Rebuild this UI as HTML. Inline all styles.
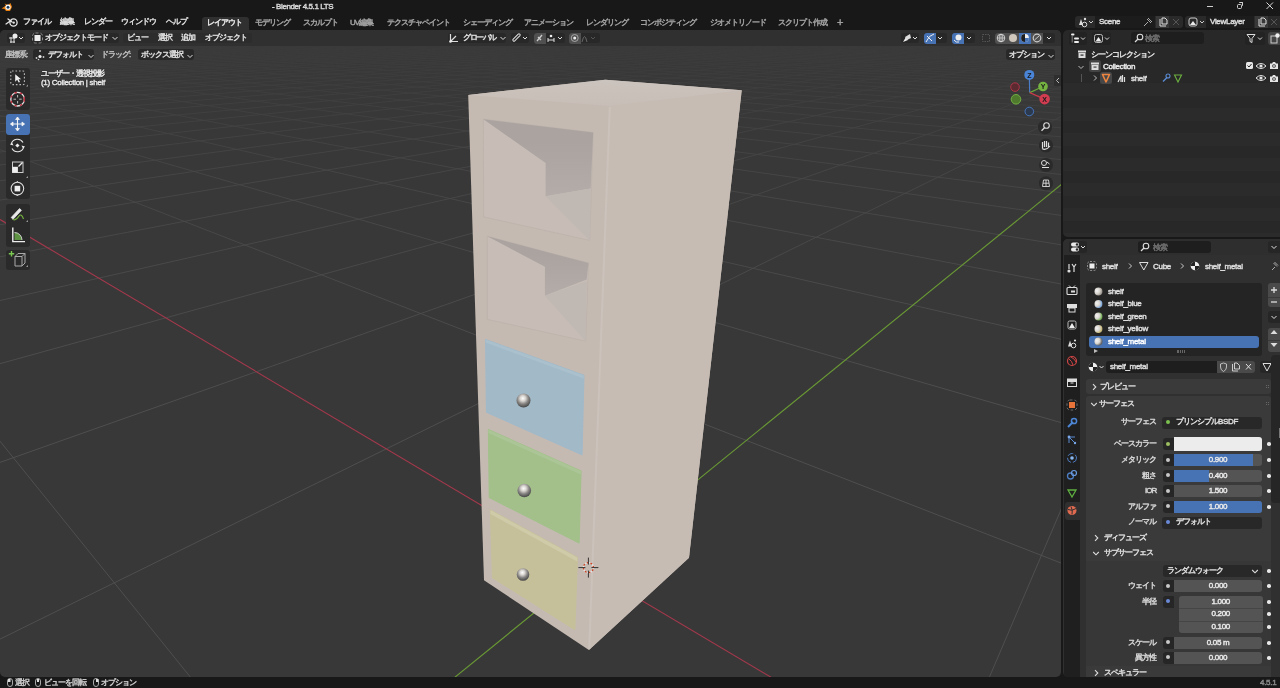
<!DOCTYPE html>
<html><head><meta charset="utf-8">
<style>
*{margin:0;padding:0;box-sizing:border-box}
html,body{width:1280px;height:688px;overflow:hidden}
body{-webkit-text-stroke-width:0.45px;background:#181818;font-family:"Liberation Sans",sans-serif;font-size:8px;color:#dcdcdc;position:relative}
.a{position:absolute;white-space:nowrap;line-height:1;will-change:transform}
.j{letter-spacing:-1px}
.l{letter-spacing:-0.3px}
.g{color:#a0a0a0}
svg{position:absolute;left:0;top:0;overflow:visible}
.btn{position:absolute;border-radius:3px;background:#282828}
.sh{text-shadow:0 0 1px #000,0 0 1px #000}
</style></head><body>
<!-- VIEWPORT -->
<div class="a" style="left:0;top:30px;width:1061px;height:647px;border-radius:5px;background:#383838;overflow:hidden"></div>
<svg width="1280" height="688" viewBox="0 0 1280 688">
<defs>
<clipPath id="vp"><rect x="0" y="30" width="1061" height="647" rx="5"/></clipPath>
<linearGradient id="gfade" x1="0" y1="0" x2="0" y2="688" gradientUnits="userSpaceOnUse">
<stop offset="0.03" stop-color="#fff" stop-opacity="0"/>
<stop offset="0.25" stop-color="#fff" stop-opacity="0.6"/>
<stop offset="0.6" stop-color="#fff" stop-opacity="1"/>
</linearGradient>
<mask id="gmask"><rect x="0" y="0" width="1280" height="688" fill="url(#gfade)"/></mask>
</defs>
<g clip-path="url(#vp)">
<g mask="url(#gmask)" stroke="#515151" stroke-width="0.9" fill="none">
<line x1="988.6" y1="679.0" x2="1063.0" y2="505.0"/>
<line x1="-2.0" y1="640.1" x2="1063.0" y2="115.6"/>
<line x1="-2.0" y1="463.1" x2="1063.0" y2="86.3"/>
<line x1="-2.0" y1="364.2" x2="1063.0" y2="70.0"/>
<line x1="-2.0" y1="301.0" x2="1063.0" y2="59.5"/>
<line x1="-2.0" y1="257.2" x2="1063.0" y2="52.3"/>
<line x1="-2.0" y1="225.1" x2="1063.0" y2="47.0"/>
<line x1="-2.0" y1="200.4" x2="1063.0" y2="42.9"/>
<line x1="-2.0" y1="181.0" x2="1063.0" y2="39.7"/>
<line x1="-2.0" y1="165.2" x2="1063.0" y2="37.1"/>
<line x1="-2.0" y1="152.2" x2="1063.0" y2="34.9"/>
<line x1="-2.0" y1="141.2" x2="1063.0" y2="33.1"/>
<line x1="-2.0" y1="131.9" x2="1063.0" y2="31.6"/>
<line x1="-2.0" y1="123.9" x2="1063.0" y2="30.2"/>
<line x1="-2.0" y1="116.8" x2="1063.0" y2="29.1"/>
<line x1="-2.0" y1="110.7" x2="1063.0" y2="28.1"/>
<line x1="-2.0" y1="105.2" x2="1051.4" y2="28.0"/>
<line x1="-2.0" y1="100.4" x2="1039.2" y2="28.0"/>
<line x1="-2.0" y1="96.0" x2="1027.0" y2="28.0"/>
<line x1="-2.0" y1="92.0" x2="1014.9" y2="28.0"/>
<line x1="-2.0" y1="88.5" x2="1002.8" y2="28.0"/>
<line x1="-2.0" y1="85.2" x2="990.8" y2="28.0"/>
<line x1="-2.0" y1="82.2" x2="978.8" y2="28.0"/>
<line x1="-2.0" y1="79.5" x2="966.8" y2="28.0"/>
<line x1="-2.0" y1="76.9" x2="954.9" y2="28.0"/>
<line x1="-2.0" y1="74.6" x2="943.1" y2="28.0"/>
<line x1="-2.0" y1="72.4" x2="931.3" y2="28.0"/>
<line x1="-2.0" y1="70.4" x2="919.5" y2="28.0"/>
<line x1="-2.0" y1="68.5" x2="907.8" y2="28.0"/>
<line x1="-2.0" y1="66.8" x2="896.2" y2="28.0"/>
<line x1="-2.0" y1="65.2" x2="884.6" y2="28.0"/>
<line x1="-2.0" y1="63.6" x2="873.0" y2="28.0"/>
<line x1="-2.0" y1="62.2" x2="861.5" y2="28.0"/>
<line x1="-2.0" y1="60.8" x2="850.0" y2="28.0"/>
<line x1="-2.0" y1="59.5" x2="838.6" y2="28.0"/>
<line x1="-2.0" y1="58.3" x2="827.2" y2="28.0"/>
<line x1="-2.0" y1="57.1" x2="815.8" y2="28.0"/>
<line x1="-2.0" y1="56.0" x2="804.5" y2="28.0"/>
<line x1="-2.0" y1="55.0" x2="793.3" y2="28.0"/>
<line x1="-2.0" y1="54.0" x2="782.0" y2="28.0"/>
<line x1="-2.0" y1="53.1" x2="770.9" y2="28.0"/>
<line x1="-2.0" y1="52.2" x2="759.7" y2="28.0"/>
<line x1="-2.0" y1="51.3" x2="748.6" y2="28.0"/>
<line x1="-2.0" y1="50.5" x2="737.6" y2="28.0"/>
<line x1="-2.0" y1="49.7" x2="726.6" y2="28.0"/>
<line x1="-2.0" y1="49.0" x2="715.6" y2="28.0"/>
<line x1="-2.0" y1="48.3" x2="704.7" y2="28.0"/>
<line x1="-2.0" y1="47.6" x2="693.8" y2="28.0"/>
<line x1="-2.0" y1="46.9" x2="683.0" y2="28.0"/>
<line x1="-2.0" y1="46.3" x2="672.2" y2="28.0"/>
<line x1="-2.0" y1="45.7" x2="661.4" y2="28.0"/>
<line x1="-2.0" y1="45.1" x2="650.7" y2="28.0"/>
<line x1="-2.0" y1="44.5" x2="640.0" y2="28.0"/>
<line x1="-2.0" y1="44.0" x2="629.4" y2="28.0"/>
<line x1="-2.0" y1="43.5" x2="618.8" y2="28.0"/>
<line x1="-2.0" y1="43.0" x2="608.2" y2="28.0"/>
<line x1="-2.0" y1="42.5" x2="597.7" y2="28.0"/>
<line x1="-2.0" y1="42.0" x2="587.2" y2="28.0"/>
<line x1="-2.0" y1="41.5" x2="576.8" y2="28.0"/>
<line x1="-2.0" y1="41.1" x2="566.4" y2="28.0"/>
<line x1="191.9" y1="679.0" x2="-2.0" y2="438.7"/>
<line x1="1063.0" y1="563.8" x2="-2.0" y2="148.8"/>
<line x1="1063.0" y1="423.2" x2="-2.0" y2="114.7"/>
<line x1="1063.0" y1="339.7" x2="-2.0" y2="94.4"/>
<line x1="1063.0" y1="284.4" x2="-2.0" y2="81.0"/>
<line x1="1063.0" y1="245.1" x2="-2.0" y2="71.5"/>
<line x1="1063.0" y1="215.7" x2="-2.0" y2="64.3"/>
<line x1="1063.0" y1="192.9" x2="-2.0" y2="58.8"/>
<line x1="1063.0" y1="174.7" x2="-2.0" y2="54.4"/>
<line x1="1063.0" y1="159.8" x2="-2.0" y2="50.8"/>
<line x1="1063.0" y1="147.4" x2="-2.0" y2="47.8"/>
<line x1="1063.0" y1="137.0" x2="-2.0" y2="45.2"/>
<line x1="1063.0" y1="128.0" x2="-2.0" y2="43.1"/>
<line x1="1063.0" y1="120.3" x2="-2.0" y2="41.2"/>
<line x1="1063.0" y1="113.5" x2="-2.0" y2="39.5"/>
<line x1="1063.0" y1="107.5" x2="-2.0" y2="38.1"/>
<line x1="1063.0" y1="102.2" x2="-2.0" y2="36.8"/>
<line x1="1063.0" y1="97.4" x2="-2.0" y2="35.6"/>
<line x1="1063.0" y1="93.1" x2="-2.0" y2="34.6"/>
<line x1="1063.0" y1="89.3" x2="-2.0" y2="33.7"/>
<line x1="1063.0" y1="85.8" x2="-2.0" y2="32.8"/>
<line x1="1063.0" y1="82.6" x2="-2.0" y2="32.0"/>
<line x1="1063.0" y1="79.6" x2="-2.0" y2="31.3"/>
<line x1="1063.0" y1="76.9" x2="-2.0" y2="30.7"/>
<line x1="1063.0" y1="74.4" x2="-2.0" y2="30.1"/>
<line x1="1063.0" y1="72.1" x2="-2.0" y2="29.5"/>
<line x1="1063.0" y1="70.0" x2="-2.0" y2="29.0"/>
<line x1="1063.0" y1="68.0" x2="-2.0" y2="28.5"/>
<line x1="1063.0" y1="66.1" x2="-2.0" y2="28.0"/>
<line x1="1063.0" y1="64.4" x2="9.1" y2="28.0"/>
<line x1="1063.0" y1="62.7" x2="21.4" y2="28.0"/>
<line x1="1063.0" y1="61.2" x2="33.7" y2="28.0"/>
<line x1="1063.0" y1="59.7" x2="46.1" y2="28.0"/>
<line x1="1063.0" y1="58.4" x2="58.6" y2="28.0"/>
<line x1="1063.0" y1="57.1" x2="71.1" y2="28.0"/>
<line x1="1063.0" y1="55.9" x2="83.6" y2="28.0"/>
<line x1="1063.0" y1="54.7" x2="96.3" y2="28.0"/>
<line x1="1063.0" y1="53.6" x2="109.0" y2="28.0"/>
<line x1="1063.0" y1="52.6" x2="121.7" y2="28.0"/>
<line x1="1063.0" y1="51.6" x2="134.6" y2="28.0"/>
<line x1="1063.0" y1="50.7" x2="147.4" y2="28.0"/>
<line x1="1063.0" y1="49.8" x2="160.4" y2="28.0"/>
<line x1="1063.0" y1="48.9" x2="173.4" y2="28.0"/>
<line x1="1063.0" y1="48.1" x2="186.5" y2="28.0"/>
<line x1="1063.0" y1="47.3" x2="199.6" y2="28.0"/>
<line x1="1063.0" y1="46.6" x2="212.9" y2="28.0"/>
<line x1="1063.0" y1="45.9" x2="226.1" y2="28.0"/>
<line x1="1063.0" y1="45.2" x2="239.5" y2="28.0"/>
<line x1="1063.0" y1="44.5" x2="252.9" y2="28.0"/>
<line x1="1063.0" y1="43.9" x2="266.4" y2="28.0"/>
<line x1="1063.0" y1="43.3" x2="279.9" y2="28.0"/>
<line x1="1063.0" y1="42.7" x2="293.5" y2="28.0"/>
<line x1="1063.0" y1="42.1" x2="307.2" y2="28.0"/>
<line x1="1063.0" y1="41.6" x2="321.0" y2="28.0"/>
<line x1="1063.0" y1="41.1" x2="334.8" y2="28.0"/>
<line x1="1063.0" y1="40.5" x2="348.7" y2="28.0"/>
<line x1="1063.0" y1="40.1" x2="362.7" y2="28.0"/>
<line x1="1063.0" y1="39.6" x2="376.8" y2="28.0"/>
<line x1="1063.0" y1="39.1" x2="390.9" y2="28.0"/>
<line x1="1063.0" y1="38.7" x2="405.1" y2="28.0"/>
</g>
<line x1="774.0" y1="679.0" x2="-2.0" y2="218.3" stroke="#a3384c" stroke-width="1.1"/><line x1="452.7" y1="679.0" x2="1063.0" y2="183.2" stroke="#6a9a34" stroke-width="1.1"/>
<g id="shelf">
<defs>
<radialGradient id="knob" cx="0.45" cy="0.35" r="0.65">
<stop offset="0" stop-color="#ffffff"/><stop offset="0.3" stop-color="#d8d4d0"/><stop offset="0.6" stop-color="#8a8886"/><stop offset="1" stop-color="#444"/>
</radialGradient>
<linearGradient id="topg" x1="0" y1="80" x2="0" y2="110" gradientUnits="userSpaceOnUse">
<stop offset="0" stop-color="#cbc3bd"/><stop offset="1" stop-color="#c7bdb6"/></linearGradient>
<linearGradient id="sh1" x1="0" y1="120" x2="0" y2="196" gradientUnits="userSpaceOnUse"><stop offset="0.3" stop-color="#aaa3a0"/><stop offset="1" stop-color="#b3aca8"/></linearGradient>
<linearGradient id="sh2" x1="0" y1="236" x2="0" y2="296" gradientUnits="userSpaceOnUse"><stop offset="0.3" stop-color="#aaa3a0"/><stop offset="1" stop-color="#b3aca8"/></linearGradient>
</defs>
<polygon points="468.2,95 605.3,79.8 741.7,90.2 689,557.7 588.9,650.1 484,580.2" fill="#c5bab2"/>
<polygon points="610,106 741.7,90.2 689,557.7 588.9,650.1" fill="#c6bcb4"/>
<polygon points="468.2,95 605.3,79.8 741.7,90.2 610,106" fill="url(#topg)"/>
<line x1="609.8" y1="107" x2="589.2" y2="649" stroke="#cbc2bb" stroke-width="2"/>
<!-- compartment 1 -->
<polygon points="483.4,119.2 593.2,132.5 589.7,240.4 483.6,216.9" fill="#c7bdb6" stroke="#bdb2ab" stroke-width="0.8"/>
<polygon points="483.4,119.2 593.2,132.5 590.7,188.4 545.6,196.3 545.6,163" fill="url(#sh1)"/>
<polygon points="545.6,196.3 590.7,188.4 589.7,240.4" fill="#c0b8b3"/>
<!-- compartment 2 -->
<polygon points="487.3,236.3 588.5,263.1 585.7,341.2 487.3,319.4" fill="#c7bdb6" stroke="#bdb2ab" stroke-width="0.8"/>
<polygon points="487.3,236.3 588.5,263.1 586.7,279.5 544.9,295.8 544.9,266.8" fill="url(#sh2)"/>
<polygon points="544.9,295.8 586.7,281.3 585.7,341.2" fill="#c0b8b3"/>
<!-- drawers -->
<polygon points="485.6,339.5 583.9,375.4 582,454.8 486.5,412.2" fill="#a2b9c8" stroke="#a2b9c8" stroke-width="1.2" stroke-linejoin="round"/>
<polygon points="485.6,339.5 583.9,375.4 583.8,378.5 485.6,342.5" fill="#aac0cd"/>
<polygon points="488.4,429.5 581,471 579.1,542.9 489.3,497.5" fill="#a3c08b" stroke="#a3c08b" stroke-width="1.2" stroke-linejoin="round"/>
<polygon points="488.4,429.5 581,471 580.9,474.5 488.4,433" fill="#abc596"/>
<polygon points="490.4,510.1 577.4,557.6 574.8,629.5 492.6,577.7" fill="#c6c09a" stroke="#c6c09a" stroke-width="1.2" stroke-linejoin="round"/>
<polygon points="490.4,510.1 577.4,557.6 577.2,561.6 490.5,514" fill="#cfcaa8"/>
<circle cx="523.5" cy="400.5" r="7" fill="url(#knob)"/>
<circle cx="524.3" cy="490.5" r="6.8" fill="url(#knob)"/>
<circle cx="523" cy="574.5" r="6.3" fill="url(#knob)"/>
<!-- 3d cursor -->
<g transform="translate(588.4,567.6)">
<circle r="5" fill="none" stroke="#e8e8e8" stroke-width="1.3" stroke-dasharray="2.2 1.7"/>
<circle r="5" fill="none" stroke="#d04020" stroke-width="1.3" stroke-dasharray="1.7 2.2" stroke-dashoffset="2.2"/>
<path d="M0,-10 L0,-3 M0,3 L0,10 M-10,0 L-3,0 M3,0 L10,0" stroke="#222" stroke-width="0.9"/>
</g>
</g>

</g>
</svg>
<!-- title bar -->
<svg width="20" height="14" style="left:0;top:0" viewBox="0 0 20 14">
<path d="M1.5,8.5 L6,5.5 L4.5,3.5 L8,5 L10.5,3 L12,7 L10,11 L6,11 L4.5,9 Z" fill="#e87d0d"/>
<circle cx="8" cy="7.2" r="2.6" fill="#fff"/><circle cx="8" cy="7.2" r="1.5" fill="#265787"/><circle cx="8" cy="7.2" r="0.6" fill="#000"/>
</svg>
<div class="a" style="left:272px;top:2.6px;letter-spacing:-0.4px;color:#d6d6d6">- Blender 4.5.1 LTS</div>
<div class="a" style="left:1207px;top:6px;width:6px;height:1px;background:#cfcfcf"></div>
<div class="a" style="left:1237px;top:3.5px;width:5px;height:5px;border:1px solid #cfcfcf;border-radius:1.5px"></div>
<div class="a" style="left:1238.5px;top:2px;width:4px;height:4px;border-top:1px solid #cfcfcf;border-right:1px solid #cfcfcf;border-radius:1px"></div>
<svg width="10" height="10" style="left:1265px;top:1px" viewBox="0 0 10 10"><path d="M1.5,1.5 L8,8 M8,1.5 L1.5,8" stroke="#d8d8d8" stroke-width="1"/></svg>
<!-- menu row -->
<svg width="14" height="12" style="left:5px;top:16px" viewBox="0 0 14 12">
<path d="M1,8 L6,4.5 M3,3 L7,6" stroke="#e6e6e6" stroke-width="1.3" stroke-linecap="round"/>
<circle cx="8.5" cy="6.5" r="3.6" fill="none" stroke="#e6e6e6" stroke-width="1.3"/><circle cx="8.7" cy="6.6" r="1.2" fill="#e6e6e6"/>
</svg>
<div class="a j" style="left:23px;top:17.8px">ファイル</div>
<div class="a j" style="left:60px;top:17.8px">編集</div>
<div class="a j" style="left:84px;top:17.8px">レンダー</div>
<div class="a j" style="left:121px;top:17.8px">ウィンドウ</div>
<div class="a j" style="left:165.5px;top:17.8px">ヘルプ</div>
<div class="a" style="left:202px;top:17px;width:46.6px;height:13px;background:#303030;border-radius:3px 3px 0 0"></div>
<div class="a j" style="left:207px;top:18.5px;color:#e8e8e8">レイアウト</div>
<div class="a j g" style="left:254.8px;top:18.5px">モデリング</div>
<div class="a j g" style="left:302.5px;top:18.5px">スカルプト</div>
<div class="a j g" style="left:350px;top:18.5px">UV編集</div>
<div class="a j g" style="left:387px;top:18.5px">テクスチャペイント</div>
<div class="a j g" style="left:463px;top:18.5px">シェーディング</div>
<div class="a j g" style="left:524px;top:18.5px">アニメーション</div>
<div class="a j g" style="left:586px;top:18.5px">レンダリング</div>
<div class="a j g" style="left:640px;top:18.5px">コンポジティング</div>
<div class="a j g" style="left:709.7px;top:18.5px">ジオメトリノード</div>
<div class="a j g" style="left:778px;top:18.5px">スクリプト作成</div>
<div class="a g" style="left:837px;top:17px;font-size:11px">+</div>
<!-- scene widget -->
<div class="a" style="left:1074.5px;top:15.6px;width:107.5px;height:12.1px;background:#2a2a2a;border-radius:3px"></div>
<div class="a" style="left:1095px;top:16px;width:60px;height:11.5px;background:#1c1c1c"></div>
<div class="a" style="left:1156px;top:15.6px;width:13px;height:12.1px;background:#383838"></div>
<svg width="20" height="12" style="left:1076px;top:16px" viewBox="0 0 20 12">
<path d="M3,9 L5,3 L7,9 Z" fill="#ddd"/><circle cx="8.5" cy="8.5" r="2.3" fill="none" stroke="#ddd" stroke-width="1"/><circle cx="9" cy="3" r="1.2" fill="#ddd"/>
<path d="M13,5 L15,7 L17,5" stroke="#ccc" fill="none" stroke-width="1"/></svg>
<div class="a l" style="left:1099px;top:17.6px">Scene</div>
<svg width="12" height="12" style="left:1142px;top:16px" viewBox="0 0 12 12"><path d="M2,10 L6,6 M5,3 L9,7 M6,2 L10,6" stroke="#aaa" stroke-width="1"/></svg>
<svg width="12" height="12" style="left:1157px;top:16px" viewBox="0 0 12 12"><path d="M3,3 L3,10 L9,10 M5,2 L8,2 L10,4 L10,8 L5,8 Z" stroke="#ddd" fill="none" stroke-width="1"/></svg>
<svg width="12" height="12" style="left:1170px;top:16px" viewBox="0 0 12 12"><path d="M3,3 L9,9 M9,3 L3,9" stroke="#555" stroke-width="1"/></svg>
<!-- view layer -->
<div class="a" style="left:1185px;top:15.6px;width:100px;height:12.1px;background:#2a2a2a;border-radius:3px"></div>
<div class="a" style="left:1206px;top:16px;width:48px;height:11.5px;background:#1c1c1c"></div>
<div class="a" style="left:1255px;top:15.6px;width:12.5px;height:12.1px;background:#383838"></div>
<svg width="20" height="12" style="left:1187px;top:16px" viewBox="0 0 20 12">
<rect x="2" y="2" width="8" height="8" rx="2" fill="none" stroke="#ccc" stroke-width="1"/><path d="M3,9 L6,5 L9,9 Z" fill="#eee"/>
<path d="M13,5 L15,7 L17,5" stroke="#ccc" fill="none" stroke-width="1"/></svg>
<div class="a l" style="left:1209.5px;top:17.6px">ViewLayer</div>
<svg width="12" height="12" style="left:1256px;top:16px" viewBox="0 0 12 12"><path d="M3,3 L3,10 L9,10 M5,2 L8,2 L10,4 L10,8 L5,8 Z" stroke="#ddd" fill="none" stroke-width="1"/></svg>
<svg width="12" height="12" style="left:1268px;top:16px" viewBox="0 0 12 12"><path d="M3,3 L9,9 M9,3 L3,9" stroke="#555" stroke-width="1"/></svg>

<!-- viewport header row 1 -->
<div class="a" style="left:0;top:30px;width:1061px;height:16px;background:#303030;border-radius:5px 5px 0 0"></div>
<div class="btn" style="left:6.5px;top:32.5px;width:18px;height:10.5px"></div>
<svg width="18" height="12" style="left:6.5px;top:32px" viewBox="0 0 18 12">
<path d="M2,6 L8,6 M3,10 L8,10 M4,5 L4,11 M7,5 L7,11" stroke="#ddd" stroke-width="1"/><circle cx="8" cy="4" r="2.5" fill="#eee"/>
<path d="M12,5 L14,7 L16,5" stroke="#ddd" fill="none" stroke-width="1"/></svg>
<div class="btn" style="left:30.5px;top:32.5px;width:88.5px;height:10.5px"></div>
<svg width="14" height="12" style="left:31px;top:32px" viewBox="0 0 14 12">
<rect x="3.5" y="3" width="6" height="6" fill="#eee"/><rect x="1.5" y="1" width="10" height="10" rx="3" fill="none" stroke="#888" stroke-width="1" stroke-dasharray="3 2"/></svg>
<div class="a j" style="left:44.5px;top:33.8px">オブジェクトモード</div>
<svg width="8" height="8" style="left:111px;top:34px" viewBox="0 0 8 8"><path d="M1.5,3 L4,5.5 L6.5,3" stroke="#ddd" fill="none" stroke-width="1"/></svg>
<div class="btn" style="left:123px;top:32.5px;width:129px;height:10.5px;background:#2c2c2c"></div>
<div class="a j" style="left:127px;top:33.8px">ビュー</div>
<div class="a j" style="left:157.5px;top:33.8px">選択</div>
<div class="a j" style="left:181px;top:33.8px">追加</div>
<div class="a j" style="left:205px;top:33.8px">オブジェクト</div>
<!-- center tools -->
<div class="btn" style="left:447.5px;top:32.5px;width:58.5px;height:10.5px"></div>
<svg width="12" height="12" style="left:448px;top:32px" viewBox="0 0 12 12"><path d="M2.5,2 L2.5,9.5 L10,9.5 M2.5,9.5 L8,4" stroke="#ddd" stroke-width="1.2" fill="none"/><circle cx="2.5" cy="9.5" r="1.3" fill="#eee"/></svg>
<div class="a j" style="left:463px;top:33.8px;letter-spacing:-1.4px">グローバル</div>
<svg width="8" height="8" style="left:499px;top:34px" viewBox="0 0 8 8"><path d="M1.5,3 L4,5.5 L6.5,3" stroke="#ddd" fill="none" stroke-width="1"/></svg>
<div class="btn" style="left:511px;top:32.5px;width:18px;height:10.5px"></div>
<svg width="18" height="12" style="left:511px;top:32px" viewBox="0 0 18 12"><path d="M3,8 L8,3" stroke="#ddd" stroke-width="3.2" stroke-linecap="round" fill="none"/><path d="M3,8 L8,3" stroke="#282828" stroke-width="1.2" stroke-linecap="round"/><path d="M12,5 L14,7 L16,5" stroke="#ddd" fill="none" stroke-width="1"/></svg>
<div class="btn" style="left:533.5px;top:32.5px;width:31.5px;height:10.5px"></div>
<div class="a" style="left:533.5px;top:32.5px;width:11.5px;height:10.5px;background:#505050;border-radius:3px 0 0 3px"></div>
<svg width="32" height="12" style="left:533.5px;top:32px" viewBox="0 0 32 12"><path d="M3,9 L8,3 M4,5 L7,8" stroke="#ccc" stroke-width="1.3" fill="none"/><path d="M14,8 L20,8 M14,6 L14,10 M20,6 L20,10" stroke="#ddd" stroke-width="1"/><circle cx="17" cy="4" r="1.3" fill="#eee"/><path d="M24,5 L26,7 L28,5" stroke="#ddd" fill="none" stroke-width="1"/></svg>
<div class="btn" style="left:569px;top:32.5px;width:31px;height:10.5px"></div>
<div class="a" style="left:569px;top:32.5px;width:11.5px;height:10.5px;background:#505050;border-radius:3px 0 0 3px"></div>
<svg width="32" height="12" style="left:569px;top:32px" viewBox="0 0 32 12"><circle cx="5.7" cy="6" r="3.5" fill="none" stroke="#bbb" stroke-width="0.8"/><circle cx="5.7" cy="6" r="1.5" fill="#eee"/><path d="M13,10 Q15.5,-1 18,10" stroke="#666" fill="none" stroke-width="1"/><path d="M22,5 L24,7 L26,5" stroke="#555" fill="none" stroke-width="1"/></svg>
<!-- right header -->
<div class="btn" style="left:901px;top:32.5px;width:18px;height:10.5px"></div>
<svg width="18" height="12" style="left:901px;top:32px" viewBox="0 0 18 12"><path d="M2,10 L5,5 L7,8 Z" fill="#eee"/><path d="M4,5 L9,2 L10,6 L6,8 Z" fill="#ddd"/><path d="M12,5 L14,7 L16,5" stroke="#ddd" fill="none" stroke-width="1"/></svg>
<div class="btn" style="left:924px;top:32.5px;width:23px;height:10.5px"></div>
<div class="a" style="left:924px;top:32.5px;width:11.5px;height:10.5px;background:#4772b3;border-radius:3px 0 0 3px"></div>
<svg width="24" height="12" style="left:924px;top:32px" viewBox="0 0 24 12"><path d="M2,10 Q5,3 10,2" stroke="#eee" fill="none" stroke-width="1"/><path d="M3,4 L8,9" stroke="#eee" stroke-width="1"/><path d="M14,5 L16,7 L18,5" stroke="#ddd" fill="none" stroke-width="1"/></svg>
<div class="btn" style="left:952px;top:32.5px;width:23px;height:10.5px"></div>
<div class="a" style="left:952px;top:32.5px;width:11.5px;height:10.5px;background:#4772b3;border-radius:3px 0 0 3px"></div>
<svg width="24" height="12" style="left:952px;top:32px" viewBox="0 0 24 12"><circle cx="6.5" cy="5.5" r="3" fill="#eee"/><path d="M2,8 Q4,11 7,10" stroke="#eee" fill="none" stroke-width="1"/><path d="M15,5 L17,7 L19,5" stroke="#ddd" fill="none" stroke-width="1"/></svg>
<div class="btn" style="left:980px;top:32.5px;width:11.5px;height:10.5px;background:#2e2e2e"></div>
<svg width="12" height="12" style="left:980px;top:32px" viewBox="0 0 12 12"><rect x="2.5" y="2.5" width="7" height="7" fill="none" stroke="#555" stroke-width="1" stroke-dasharray="1.5 1"/></svg>
<div class="btn" style="left:995px;top:32.5px;width:60px;height:10.5px"></div>
<div class="a" style="left:995px;top:32.5px;width:48px;height:10.5px;background:#505050;border-radius:3px 0 0 3px"></div>
<div class="a" style="left:1019px;top:32.5px;width:12px;height:10.5px;background:#4772b3"></div>
<svg width="60" height="12" style="left:995px;top:32px" viewBox="0 0 60 12">
<circle cx="6" cy="6" r="3.8" fill="none" stroke="#ddd" stroke-width="0.9"/><path d="M2.2,6 L9.8,6 M6,2.2 L6,9.8" stroke="#ddd" stroke-width="0.7"/><ellipse cx="6" cy="6" rx="1.8" ry="3.8" fill="none" stroke="#ddd" stroke-width="0.7"/>
<circle cx="18" cy="6" r="4" fill="#cfc6bc"/>
<circle cx="30" cy="6" r="3.9" fill="#eee"/><path d="M30,2.1 A3.9,3.9 0 0 0 30,9.9 Z" fill="#1d1d1d"/><path d="M30,6 L33.9,6 A3.9,3.9 0 0 1 30,9.9 Z" fill="#4772b3"/>
<circle cx="42" cy="6" r="3.8" fill="none" stroke="#ccc" stroke-width="1.2"/><path d="M39.5,8 L44.5,3.5" stroke="#ccc" stroke-width="1"/>
<path d="M52,5 L54,7 L56,5" stroke="#ddd" fill="none" stroke-width="1"/></svg>
<!-- row 2 tool settings -->
<div class="a j" style="left:5px;top:50.7px;color:#bdbdbd">座標系:</div>
<div class="btn" style="left:32.5px;top:49px;width:61px;height:11px"></div>
<svg width="14" height="12" style="left:33px;top:49px" viewBox="0 0 14 12"><circle cx="7" cy="2" r="0.9" fill="#ccc"/><circle cx="3.5" cy="9" r="0.9" fill="#ccc"/><circle cx="7" cy="7.5" r="1.6" fill="#eee"/><circle cx="10.5" cy="8" r="0.9" fill="#ccc"/><circle cx="5.5" cy="10.5" r="0.8" fill="#ccc"/></svg>
<div class="a j" style="left:48px;top:50.7px">デフォルト</div>
<svg width="8" height="8" style="left:86.5px;top:51.5px" viewBox="0 0 8 8"><path d="M1.5,3 L4,5.5 L6.5,3" stroke="#ddd" fill="none" stroke-width="1"/></svg>
<div class="a j" style="left:101px;top:50.7px;color:#bdbdbd">ドラッグ:</div>
<div class="btn" style="left:137.5px;top:49px;width:56.5px;height:11px"></div>
<div class="a j" style="left:141px;top:50.7px">ボックス選択</div>
<svg width="8" height="8" style="left:186px;top:51.5px" viewBox="0 0 8 8"><path d="M1.5,3 L4,5.5 L6.5,3" stroke="#ddd" fill="none" stroke-width="1"/></svg>
<div class="btn" style="left:1006px;top:49px;width:49px;height:11px"></div>
<div class="a j" style="left:1009px;top:50.7px">オプション</div>
<svg width="8" height="8" style="left:1047px;top:51.5px" viewBox="0 0 8 8"><path d="M1.5,3 L4,5.5 L6.5,3" stroke="#ddd" fill="none" stroke-width="1"/></svg>
<!-- overlay text -->
<div class="a j sh" style="left:41px;top:69.5px;color:#e6e6e6">ユーザー・透視投影</div>
<div class="a l sh" style="left:40.6px;top:79.2px;color:#e6e6e6">(1) Collection | shelf</div>
<!-- nav gizmo -->
<svg width="80" height="140" style="left:990px;top:60px" viewBox="990 60 80 140">
<line x1="1029.7" y1="92.6" x2="1029.3" y2="74.9" stroke="#4a7cc8" stroke-width="1.2"/>
<line x1="1029.7" y1="92.6" x2="1043" y2="86.5" stroke="#6aa83a" stroke-width="1.2"/>
<line x1="1029.7" y1="92.6" x2="1044.6" y2="99.1" stroke="#c83a4a" stroke-width="1.2"/>
<circle cx="1015" cy="87.1" r="4.3" fill="#5a2a30" stroke="#b83648" stroke-width="0.9"/>
<circle cx="1016" cy="99.3" r="4.8" fill="#4f7a2e" stroke="#76b442" stroke-width="0.9"/>
<circle cx="1029.3" cy="111.5" r="4.3" fill="#2c3a50" stroke="#4a7cc8" stroke-width="0.9"/>
<circle cx="1029.3" cy="74.9" r="5" fill="#4a84d6"/>
<circle cx="1043" cy="86.5" r="4.8" fill="#76b442"/>
<circle cx="1044.6" cy="99.1" r="5.3" fill="#d23c50"/>
<text x="1029.3" y="77.6" font-size="7" font-weight="bold" text-anchor="middle" fill="#1a1a1a" font-family="Liberation Sans">Z</text>
<text x="1043" y="89.2" font-size="7" font-weight="bold" text-anchor="middle" fill="#1a1a1a" font-family="Liberation Sans">Y</text>
<text x="1044.6" y="101.8" font-size="7" font-weight="bold" text-anchor="middle" fill="#1a1a1a" font-family="Liberation Sans">X</text>
<circle cx="1045" cy="127.2" r="7" fill="#2a2a2a"/><circle cx="1046.5" cy="125.5" r="2.8" fill="none" stroke="#ddd" stroke-width="1.1"/><path d="M1044.5,127.7 L1041.5,130.7" stroke="#ddd" stroke-width="1.3"/>
<circle cx="1046" cy="145.5" r="7" fill="#2a2a2a"/><path d="M1042.5,148 L1042.5,142 M1044.5,147 L1044.5,141 M1046.5,147 L1046.5,141 M1048.5,147 L1048.5,142.5 M1042,148.5 Q1046,151 1050,146" stroke="#ddd" stroke-width="1.2" fill="none"/>
<circle cx="1046" cy="165" r="7" fill="#2a2a2a"/><circle cx="1044" cy="163" r="2.5" fill="none" stroke="#ddd" stroke-width="1"/><path d="M1042,167.5 L1049,167.5 M1047,162 L1049.5,164" stroke="#ddd" stroke-width="1"/>
<circle cx="1046" cy="183.2" r="7" fill="#2a2a2a"/><path d="M1042.5,186.5 L1043.5,180 L1048.5,180 L1049.5,186.5 Z M1043,183.2 L1049,183.2 M1046,180 L1046,186.5" stroke="#ddd" stroke-width="0.9" fill="none"/>
<rect x="1054" y="75" width="7" height="11" fill="#2e2e2e"/><path d="M1059,78 L1056.5,80.5 L1059,83" stroke="#ccc" fill="none" stroke-width="0.9"/>
</svg>

<div class="a" style="left:6px;top:68px;width:23.5px;height:41.5px;background:#2a2a2a;border-radius:3px"></div>
<div class="a" style="left:6px;top:114px;width:23.5px;height:85px;background:#2a2a2a;border-radius:3px"></div>
<div class="a" style="left:6px;top:114px;width:23.5px;height:20.5px;background:#4772b3;border-radius:3px"></div>
<div class="a" style="left:6px;top:204px;width:23.5px;height:43px;background:#2a2a2a;border-radius:3px"></div>
<div class="a" style="left:6px;top:250px;width:23.5px;height:20px;background:#2a2a2a;border-radius:3px"></div>
<svg width="40" height="220" style="left:0;top:60px" viewBox="0 60 40 220">
<g fill="none" stroke="#ddd" stroke-width="1">
<rect x="10.8" y="71" width="13.6" height="13.6" rx="1.2" stroke="#b8b8b8" stroke-width="1.1" stroke-dasharray="1.6 1.9"/>
<path d="M15.2,74.3 L15.2,81.8 L17.2,79.8 L18.7,82.6 L20,82 L18.6,79.3 L21.2,79.3 Z" fill="#f0f0f0" stroke="none"/>
<path d="M26,86.5 L28,84.5 L28,86.5 Z" fill="#999" stroke="none"/>
<circle cx="17.6" cy="99.2" r="6.8" stroke="#e6e6e6" stroke-width="1.3"/>
<circle cx="17.6" cy="99.2" r="6.8" stroke="#c03040" stroke-width="1.4" stroke-dasharray="2.5 3.2"/>
<path d="M17.6,95 L17.6,97.5 M17.6,101 L17.6,103.5 M13.5,99.2 L16,99.2 M19.2,99.2 L21.7,99.2" stroke="#bbb" stroke-width="1"/>
<path d="M17.5,117.5 L17.5,130.5 M10.8,124 L24.2,124" stroke="#f4f4f4" stroke-width="1.1"/>
<path d="M15.6,119.5 L17.5,117 L19.4,119.5 Z M15.6,128.5 L17.5,131 L19.4,128.5 Z M13,122 L10.5,124 L13,126 Z M22,122 L24.5,124 L22,126 Z" fill="#f4f4f4" stroke="#f4f4f4" stroke-width="0.8"/>
<path d="M11.3,143.8 A6.4,6.4 0 0 1 23,142.5 M23.7,147.2 A6.4,6.4 0 0 1 12,148.5" stroke="#e8e8e8" stroke-width="1.1"/>
<path d="M10,144.5 L12,142.5 L13.5,145.5 Z M25,146.5 L23,148.5 L21.5,145.5 Z" fill="#eee" stroke="none"/>
<rect x="15.9" y="144" width="3" height="3" fill="#eee" stroke="none" transform="rotate(45 17.4 145.5)"/>
<rect x="12.5" y="162" width="10.5" height="10.5" stroke="#ccc" stroke-width="1"/>
<rect x="12.3" y="166.8" width="5.6" height="5.8" fill="#eee" stroke="none"/>
<path d="M18.5,166.5 L22.5,162.5" stroke="#eee" stroke-width="1.2"/>
<path d="M26,178 L28,176 L28,178 Z" fill="#999" stroke="none"/>
<circle cx="17.4" cy="188.6" r="6.3" stroke="#ddd" stroke-width="1.1"/>
<rect x="14.6" y="185.8" width="5.6" height="5.6" fill="#eee" stroke="none"/>
<path d="M16.4,182.5 L17.4,181.3 L18.4,182.5 M16.4,194.7 L17.4,195.9 L18.4,194.7" stroke="#ddd"/>
<path d="M11.2,217.5 L19.6,208.5 L21.4,210.3 L13,219.3 Z" fill="#eaeaea" stroke="#eaeaea" stroke-width="0.8"/>
<path d="M13,219.5 Q16,221 19,216 Q21.5,213 23.5,219" stroke="#76b440" stroke-width="1.1"/>
<path d="M26,222 L28,220 L28,222 Z" fill="#999" stroke="none"/>
<path d="M12.8,227.5 L12.8,241.6 L25,241.6" stroke="#eee" stroke-width="1.4"/>
<path d="M14.5,240 L14.5,232.5 A7.5,7.5 0 0 1 22,240 Z" fill="#5e9444" stroke="none"/>
<path d="M14.5,232.5 A7.5,7.5 0 0 1 22,240" stroke="#ddd" stroke-width="0.9"/>
<path d="M15,256.5 L22,256.5 L25,253.5 L25,263 L22,266 L15,266 Z M15,256.5 L18,253.5 L25,253.5 M22,256.5 L22,266" stroke="#aaa" stroke-width="1"/>
<path d="M11.5,251 L11.5,256.5 M8.8,253.8 L14.2,253.8" stroke="#7ac850" stroke-width="1.4"/>
<path d="M26,267 L28,265 L28,267 Z" fill="#999" stroke="none"/>
</g>
</svg>

<div class="a" style="left:1063px;top:30px;width:230px;height:206.5px;background:#282828;border-radius:5px;overflow:hidden">
<div class="a" style="left:0;top:53px;width:230px;height:12.5px;background:#2b2b2b"></div>
<div class="a" style="left:0;top:78px;width:230px;height:12.5px;background:#2b2b2b"></div>
<div class="a" style="left:0;top:103px;width:230px;height:12.5px;background:#2b2b2b"></div>
<div class="a" style="left:0;top:128px;width:230px;height:12.5px;background:#2b2b2b"></div>
<div class="a" style="left:0;top:153px;width:230px;height:12.5px;background:#2b2b2b"></div>
<div class="a" style="left:0;top:178px;width:230px;height:12.5px;background:#2b2b2b"></div>
<div class="a" style="left:0;top:203px;width:230px;height:12.5px;background:#2b2b2b"></div>
</div>
<div class="btn" style="left:1069px;top:32px;width:18px;height:13px;background:#232323"></div>
<svg width="18" height="13" style="left:1069px;top:32px" viewBox="0 0 18 13"><rect x="2" y="1.5" width="3.5" height="2" rx="1" fill="#eee"/><path d="M3.2,4 L3.2,10.5" stroke="#999" stroke-width="0.8"/><rect x="5" y="5.5" width="5" height="2" rx="1" fill="#eee"/><rect x="5" y="9" width="5" height="2" rx="1" fill="#eee"/><path d="M12,5.5 L14,7.5 L16,5.5" stroke="#ddd" fill="none" stroke-width="1"/></svg>
<div class="btn" style="left:1092px;top:32px;width:19px;height:13px;background:#232323"></div>
<svg width="19" height="13" style="left:1092px;top:32px" viewBox="0 0 19 13"><rect x="2.5" y="2.5" width="8" height="8" rx="2" fill="none" stroke="#bbb" stroke-width="1"/><path d="M3.5,9.5 L6.5,5 L9.5,9.5 Z" fill="#eee"/><path d="M13,5.5 L15,7.5 L17,5.5" stroke="#ddd" fill="none" stroke-width="1"/></svg>
<div class="btn" style="left:1131px;top:32px;width:73px;height:12px;background:#1e1e1e"></div>
<svg width="12" height="12" style="left:1133px;top:32px" viewBox="0 0 12 12"><circle cx="7" cy="5" r="2.8" fill="none" stroke="#ddd" stroke-width="1.1"/><path d="M5,7 L2,10" stroke="#ddd" stroke-width="1.3"/></svg>
<div class="a j" style="left:1145px;top:34.5px;color:#6e6e6e">検索</div>
<div class="btn" style="left:1245px;top:32px;width:20px;height:13px;background:#232323"></div>
<svg width="20" height="13" style="left:1245px;top:32px" viewBox="0 0 20 13"><path d="M2,2.5 L10,2.5 L7,6.5 L7,10.5 L5,9.5 L5,6.5 Z" fill="none" stroke="#ddd" stroke-width="1"/><path d="M13,5.5 L15,7.5 L17,5.5" stroke="#ddd" fill="none" stroke-width="1"/></svg>
<div class="a" style="left:1268px;top:32px;width:14px;height:13px;background:#444;border-radius:3px"></div>
<svg width="14" height="13" style="left:1268px;top:32px" viewBox="0 0 14 13"><rect x="3" y="4" width="6" height="7" fill="none" stroke="#ccc" stroke-width="1"/><circle cx="9.5" cy="3.5" r="2.2" fill="#eee"/></svg>
<!-- rows -->
<svg width="10" height="10" style="left:1077px;top:49px" viewBox="0 0 10 10"><rect x="1" y="1.5" width="8" height="2" fill="#ddd"/><rect x="1.5" y="4" width="7" height="5" fill="#ddd"/><rect x="3.5" y="5.5" width="3" height="1.2" fill="#282828"/></svg>
<div class="a j" style="left:1091px;top:50.5px">シーンコレクション</div>
<svg width="8" height="8" style="left:1077px;top:62.5px" viewBox="0 0 8 8"><path d="M1.5,3 L4,5.5 L6.5,3" stroke="#bbb" fill="none" stroke-width="1"/></svg>
<div class="a" style="left:1089px;top:60px;width:11.5px;height:11.5px;background:#444;border-radius:2.5px"></div>
<svg width="10" height="10" style="left:1090px;top:61px" viewBox="0 0 10 10"><rect x="1" y="1.5" width="8" height="2" fill="#ddd"/><rect x="1.5" y="4" width="7" height="5" fill="#ddd"/><rect x="3.5" y="5.5" width="3" height="1.2" fill="#444"/></svg>
<div class="a l" style="left:1103px;top:62.5px;color:#e8e8e8">Collection</div>
<div class="a" style="left:1245.5px;top:62px;width:7px;height:7px;background:#e6e6e6;border-radius:1.5px"></div>
<svg width="7" height="7" style="left:1245.5px;top:62px" viewBox="0 0 7 7"><path d="M1.5,3.5 L3,5 L5.5,2" stroke="#222" stroke-width="1" fill="none"/></svg>
<svg width="12" height="8" style="left:1255px;top:61.5px" viewBox="0 0 12 8"><path d="M1,4 Q6,-1 11,4 Q6,9 1,4 Z" fill="none" stroke="#e6e6e6" stroke-width="1"/><circle cx="6" cy="4" r="1.6" fill="#e6e6e6"/></svg>
<svg width="10" height="9" style="left:1268.5px;top:61px" viewBox="0 0 10 9"><path d="M1,2.5 L3,2.5 L4,1 L6,1 L7,2.5 L9,2.5 L9,8 L1,8 Z" fill="#e6e6e6"/><circle cx="5" cy="5" r="1.8" fill="#282828"/><circle cx="5" cy="5" r="0.9" fill="#e6e6e6"/></svg>
<div class="a" style="left:1081px;top:74px;width:1px;height:8px;background:#555"></div>
<svg width="8" height="8" style="left:1091px;top:74px" viewBox="0 0 8 8"><path d="M3,1.5 L5.5,4 L3,6.5" stroke="#bbb" fill="none" stroke-width="1"/></svg>
<div class="a" style="left:1100px;top:72px;width:12px;height:12px;background:#474747;border-radius:2.5px"></div>
<svg width="12" height="12" style="left:1100px;top:72px" viewBox="0 0 12 12"><path d="M2.5,2.5 L9.5,2.5 L6,10 Z" fill="none" stroke="#ee8540" stroke-width="1.6" stroke-linejoin="round"/></svg>
<svg width="10" height="10" style="left:1117px;top:73px" viewBox="0 0 10 10"><path d="M1,9 L4,3 L4,9 M5.5,9 L5.5,2 M7.5,9 L7.5,4" stroke="#ddd" stroke-width="1.2" fill="none"/></svg>
<div class="a l" style="left:1131px;top:74.5px">shelf</div>
<svg width="10" height="10" style="left:1161px;top:73px" viewBox="0 0 10 10"><path d="M2,8.5 L6,4.5" stroke="#5a8ad0" stroke-width="1.4"/><circle cx="7" cy="3" r="2" fill="none" stroke="#5a8ad0" stroke-width="1.1"/></svg>
<svg width="10" height="10" style="left:1173px;top:73px" viewBox="0 0 10 10"><path d="M1.5,2 L8.5,2 L5,9 Z" fill="none" stroke="#6cb040" stroke-width="1.1"/></svg>
<svg width="12" height="8" style="left:1255px;top:74px" viewBox="0 0 12 8"><path d="M1,4 Q6,-1 11,4 Q6,9 1,4 Z" fill="none" stroke="#e6e6e6" stroke-width="1"/><circle cx="6" cy="4" r="1.6" fill="#e6e6e6"/></svg>
<svg width="10" height="9" style="left:1268.5px;top:73.5px" viewBox="0 0 10 9"><path d="M1,2.5 L3,2.5 L4,1 L6,1 L7,2.5 L9,2.5 L9,8 L1,8 Z" fill="#e6e6e6"/><circle cx="5" cy="5" r="1.8" fill="#282828"/><circle cx="5" cy="5" r="0.9" fill="#e6e6e6"/></svg>

<div class="a" style="left:1063px;top:239px;width:230px;height:438px;background:#303030;border-radius:5px;overflow:hidden"></div>
<div class="a" style="left:1063px;top:239px;width:230px;height:16px;background:#2e2e2e;border-radius:5px 5px 0 0"></div>
<div class="a" style="left:1064px;top:255px;width:16px;height:422px;background:#1f1f1f;border-radius:0 0 0 4px"></div>
<div class="btn" style="left:1069px;top:241px;width:18px;height:12px;background:#262626"></div>
<svg width="18" height="12" style="left:1069px;top:241px" viewBox="0 0 18 12"><rect x="2" y="1.5" width="8" height="4" rx="2" fill="#e8e8e8"/><rect x="2" y="6.5" width="8" height="4" rx="2" fill="#e8e8e8"/><circle cx="8" cy="3.5" r="1.2" fill="#262626"/><circle cx="8" cy="8.5" r="1.2" fill="#262626"/><path d="M12,5 L14,7 L16,5" stroke="#ddd" fill="none" stroke-width="1"/></svg>
<div class="btn" style="left:1138px;top:241px;width:73px;height:11.5px;background:#1e1e1e"></div>
<svg width="12" height="12" style="left:1139px;top:241px" viewBox="0 0 12 12"><circle cx="7" cy="5" r="2.8" fill="none" stroke="#ddd" stroke-width="1.1"/><path d="M5,7 L2,10" stroke="#ddd" stroke-width="1.3"/></svg>
<div class="a j" style="left:1153px;top:243.5px;color:#6e6e6e">検索</div>
<div class="btn" style="left:1268px;top:241px;width:14px;height:12px;background:#262626"></div>
<svg width="8" height="8" style="left:1270px;top:243px" viewBox="0 0 8 8"><path d="M1.5,3 L4,5.5 L6.5,3" stroke="#ddd" fill="none" stroke-width="1"/></svg>
<div class="a" style="left:1065px;top:501.5px;width:15px;height:18px;background:#303030;border-radius:3px 0 0 3px"></div>
<svg width="20" height="300" style="left:1062px;top:255px" viewBox="1062 255 20 300">
<path d="M1069,264 L1069,269 M1074,272 L1074,267 M1072,264 L1074,267 L1076,264" stroke="#ddd" stroke-width="1.2" fill="none"/><circle cx="1069" cy="271" r="1.6" fill="#ddd"/>
<rect x="1067" y="287.5" width="10" height="7" rx="1" fill="none" stroke="#ddd" stroke-width="1.1"/><path d="M1069,285.5 L1071,287.5 M1075,285.5 L1073,287.5" stroke="#ddd"/><rect x="1071" y="290.5" width="4" height="2" fill="#ddd"/>
<rect x="1067" y="304" width="10" height="4" fill="#ddd"/><rect x="1069" y="308" width="6" height="4" fill="none" stroke="#ddd" stroke-width="1"/>
<rect x="1068" y="321" width="8" height="8" rx="1.5" fill="none" stroke="#bbb" stroke-width="1"/><path d="M1069,328 L1072,323 L1075,328 Z" fill="#eee"/>
<path d="M1068,346.5 L1070,340.5 L1072,346.5 Z" fill="#ddd"/><circle cx="1073.5" cy="345.5" r="2.3" fill="none" stroke="#ddd"/><circle cx="1075" cy="340.5" r="1.1" fill="#ddd"/>
<circle cx="1072" cy="361" r="4.5" fill="none" stroke="#d04545" stroke-width="1.2"/><path d="M1069,359 Q1072,361 1073,365 M1071,357 Q1075,359 1076,362" stroke="#d04545" fill="none"/>
<rect x="1067" y="378.5" width="10" height="2.5" fill="#ddd"/><rect x="1067.5" y="381.5" width="9" height="5" fill="none" stroke="#ddd"/><rect x="1070.5" y="382.5" width="3" height="1" fill="#ddd"/>
<rect x="1069" y="402" width="6" height="6" fill="#e8743a"/><rect x="1067" y="400" width="10" height="10" rx="3" fill="none" stroke="#777" stroke-width="0.9" stroke-dasharray="2.5 2"/>
<path d="M1068,427 L1073,422" stroke="#4d86d6" stroke-width="2"/><circle cx="1074" cy="421" r="2.6" fill="none" stroke="#4d86d6" stroke-width="1.5"/>
<path d="M1069,437 L1075,443 M1069,437 L1075,437 M1069,437 L1069,443" stroke="#5a8ad0" stroke-width="1"/><circle cx="1069" cy="437" r="1.4" fill="#7aa8e8"/><circle cx="1075" cy="443" r="1.2" fill="#7aa8e8"/>
<circle cx="1072" cy="458" r="4.5" fill="none" stroke="#4d7cc0" stroke-width="1" stroke-dasharray="6 2"/><circle cx="1072" cy="458" r="1.8" fill="#8ab8f0"/>
<circle cx="1070.5" cy="476" r="3" fill="none" stroke="#4d7cc0" stroke-width="1.3"/><circle cx="1074" cy="473" r="2.5" fill="none" stroke="#6a9ae0" stroke-width="1.2"/>
<path d="M1068,490 L1076,490 L1072,497 Z" fill="none" stroke="#5fb040" stroke-width="1.3"/>
<circle cx="1072" cy="510.5" r="4.5" fill="#e06a50"/><path d="M1068,509.5 Q1072,511.5 1076,508.5 M1071,506.5 Q1073,510.5 1072,514.5" stroke="#303030" stroke-width="1" fill="none"/>
</svg>
<svg width="190" height="12" style="left:1085px;top:260px" viewBox="1085 260 190 12"><rect x="1089.5" y="263.5" width="5" height="5" fill="#eee"/><rect x="1087.5" y="261.5" width="9" height="9" rx="2.5" fill="none" stroke="#999" stroke-width="0.9" stroke-dasharray="2 1.5"/><path d="M1129,263.5 L1131.5,266 L1129,268.5" stroke="#ccc" fill="none" stroke-width="1"/><path d="M1139.5,262.5 L1148,262.5 L1143.8,270 Z" fill="none" stroke="#ddd" stroke-width="1"/><path d="M1181,263.5 L1183.5,266 L1181,268.5" stroke="#ccc" fill="none" stroke-width="1"/><circle cx="1195" cy="266" r="4.3" fill="#eee"/><path d="M1195,261.7 A4.3,4.3 0 0 0 1190.7,266 L1195,266 Z M1195,266 L1199.3,266 A4.3,4.3 0 0 1 1195,270.3 Z" fill="#222"/><path d="M1272,270 L1275,267 M1273.5,263 L1277,266.5 M1274.5,262 L1278,265.5" stroke="#aaa" stroke-width="1"/></svg>
<div class="a l" style="left:1102px;top:262.5px">shelf</div>
<div class="a l" style="left:1153px;top:262.5px">Cube</div>
<div class="a l" style="left:1205px;top:262.5px">shelf_metal</div>
<div class="a" style="left:1086px;top:283px;width:176px;height:73px;background:#242424;border-radius:3px"></div>
<div class="a" style="left:1089px;top:336px;width:170px;height:12px;background:#4772b3;border-radius:3px"></div>
<svg width="20" height="60" style="left:1090px;top:285px" viewBox="1090 285 20 60"><defs><radialGradient id="mgshelf" cx="0.3" cy="0.4" r="0.8"><stop offset="0" stop-color="#f4f4f4"/><stop offset="0.45" stop-color="#d8d4cf"/><stop offset="0.8" stop-color="#a09890"/><stop offset="1" stop-color="#555"/></radialGradient></defs><circle cx="1098.5" cy="291.5" r="4" fill="url(#mgshelf)"/><defs><radialGradient id="mgshelf_blue" cx="0.3" cy="0.4" r="0.8"><stop offset="0" stop-color="#f4f4f4"/><stop offset="0.45" stop-color="#d8d4cf"/><stop offset="0.8" stop-color="#7aa8e0"/><stop offset="1" stop-color="#555"/></radialGradient></defs><circle cx="1098.5" cy="304" r="4" fill="url(#mgshelf_blue)"/><defs><radialGradient id="mgshelf_green" cx="0.3" cy="0.4" r="0.8"><stop offset="0" stop-color="#f4f4f4"/><stop offset="0.45" stop-color="#d8d4cf"/><stop offset="0.8" stop-color="#70b050"/><stop offset="1" stop-color="#555"/></radialGradient></defs><circle cx="1098.5" cy="316.5" r="4" fill="url(#mgshelf_green)"/><defs><radialGradient id="mgshelf_yellow" cx="0.3" cy="0.4" r="0.8"><stop offset="0" stop-color="#f4f4f4"/><stop offset="0.45" stop-color="#d8d4cf"/><stop offset="0.8" stop-color="#c8b870"/><stop offset="1" stop-color="#555"/></radialGradient></defs><circle cx="1098.5" cy="329" r="4" fill="url(#mgshelf_yellow)"/><defs><radialGradient id="mgshelf_metal" cx="0.3" cy="0.4" r="0.8"><stop offset="0" stop-color="#f4f4f4"/><stop offset="0.45" stop-color="#d8d4cf"/><stop offset="0.8" stop-color="#666"/><stop offset="1" stop-color="#555"/></radialGradient></defs><circle cx="1098.5" cy="341.5" r="4" fill="url(#mgshelf_metal)"/></svg>
<div class="a l" style="left:1108px;top:287.7px;color:#ddd">shelf</div>
<div class="a l" style="left:1108px;top:300.2px;color:#ddd">shelf_blue</div>
<div class="a l" style="left:1108px;top:312.7px;color:#ddd">shelf_green</div>
<div class="a l" style="left:1108px;top:325.2px;color:#ddd">shelf_yellow</div>
<div class="a l" style="left:1108px;top:337.7px;color:#fff">shelf_metal</div>
<svg width="8" height="6" style="left:1093px;top:348px" viewBox="0 0 8 6"><path d="M1,1 L5,3 L1,5 Z" fill="#bbb"/></svg>
<div class="a" style="left:1177px;top:350px;width:8px;height:3px;border-left:1px solid #666;border-right:1px solid #666;background:repeating-linear-gradient(90deg,#666 0 1px,transparent 1px 2px)"></div>
<div class="a" style="left:1268px;top:283px;width:14px;height:24px;background:#4a4a4a;border-radius:3px"></div>
<div class="a" style="left:1268px;top:296.5px;width:14px;height:0.8px;background:#3a3a3a"></div>
<div class="a" style="left:1268px;top:311px;width:14px;height:12px;background:#262626;border-radius:3px"></div>
<div class="a" style="left:1268px;top:328px;width:14px;height:24px;background:#4a4a4a;border-radius:3px"></div>
<div class="a" style="left:1268px;top:340px;width:14px;height:0.8px;background:#3a3a3a"></div>
<svg width="14" height="72" style="left:1268px;top:283px" viewBox="0 0 14 72"><path d="M3,7 L9,7 M6,4 L6,10" stroke="#ddd" stroke-width="1.3"/><path d="M3,19 L9,19" stroke="#ddd" stroke-width="1.3"/><path d="M3.5,33 L6,35.5 L8.5,33" stroke="#ddd" fill="none" stroke-width="1"/><path d="M2.5,51 L6,47 L9.5,51 Z" fill="#ddd"/><path d="M2.5,60 L6,64 L9.5,60 Z" fill="#ddd"/></svg>
<svg width="20" height="12" style="left:1086px;top:361px" viewBox="0 0 20 12"><circle cx="7" cy="6" r="4.3" fill="#eee"/><path d="M7,1.7 A4.3,4.3 0 0 0 2.7,6 L7,6 Z M7,6 L11.3,6 A4.3,4.3 0 0 1 7,10.3 Z" fill="#222"/><path d="M13.5,5 L15.5,7 L17.5,5" stroke="#ddd" fill="none" stroke-width="1"/></svg>
<div class="a" style="left:1106px;top:361px;width:111px;height:12px;background:#1e1e1e;border-radius:3px 0 0 3px"></div>
<div class="a l" style="left:1110px;top:363px">shelf_metal</div>
<div class="a" style="left:1217px;top:361px;width:38px;height:12px;background:#4a4a4a;border-radius:0 3px 3px 0"></div>
<svg width="40" height="12" style="left:1217px;top:361px" viewBox="0 0 40 12"><path d="M3.5,3 L6.5,2 L9.5,3 L9.5,6 Q9.5,9 6.5,10.5 Q3.5,9 3.5,6 Z" fill="none" stroke="#ccc" stroke-width="0.9"/><path d="M15.5,3 L15.5,10 L21,10 M17.5,2 L20,2 L22.5,4.5 L22.5,8 L17.5,8 Z" stroke="#ddd" fill="none" stroke-width="0.9"/><path d="M29,3 L34,8.5 M34,3 L29,8.5" stroke="#ddd" stroke-width="1"/></svg>
<div class="a" style="left:1260px;top:361px;width:22px;height:12px;background:#262626;border-radius:3px"></div>
<svg width="20" height="12" style="left:1261px;top:361px" viewBox="0 0 20 12"><path d="M2,2.5 L10,2.5 L6,10 Z" fill="none" stroke="#ddd" stroke-width="1"/><path d="M13,5 L15,7 L17,5" stroke="#ccc" fill="none" stroke-width="1"/></svg>
<div class="a" style="left:1086px;top:379px;width:185px;height:15px;background:#3a3a3a;border-radius:3px"></div>
<div class="a" style="left:1086px;top:396px;width:185px;height:281px;background:#3a3a3a;border-radius:3px"></div>
<div class="a" style="left:1086px;top:561px;width:185px;height:116px;background:#373737"></div>
<div class="a" style="left:1271px;top:355px;width:12px;height:148px;background:#262626;border-radius:4px 0 0 4px"></div>
<div class="a" style="left:1278.5px;top:428px;width:1.5px;height:10px;background:#777"></div>
<svg width="8" height="8" style="left:1090px;top:382.5px" viewBox="0 0 8 8"><path d="M3,1.2 L5.8,4 L3,6.8" stroke="#ddd" fill="none" stroke-width="1.1"/></svg>
<div class="a j" style="left:1100px;top:382.7px;">プレビュー</div>
<svg width="8" height="8" style="left:1090px;top:400px" viewBox="0 0 8 8"><path d="M1.2,3 L4,5.8 L6.8,3" stroke="#ddd" fill="none" stroke-width="1.1"/></svg>
<div class="a j" style="left:1099px;top:400.2px;">サーフェス</div>
<svg width="6" height="30" style="left:1266px;top:382px" viewBox="0 0 6 30"><g fill="#666"><rect x="0" y="3" width="1" height="1"/><rect x="2" y="3" width="1" height="1"/><rect x="0" y="5" width="1" height="1"/><rect x="2" y="5" width="1" height="1"/><rect x="0" y="20" width="1" height="1"/><rect x="2" y="20" width="1" height="1"/><rect x="0" y="22" width="1" height="1"/><rect x="2" y="22" width="1" height="1"/></g></svg>
<div class="a j" style="right:124px;top:418.2px;color:#d4d4d4">サーフェス</div>
<div class="a" style="left:1162px;top:416.5px;width:100px;height:11.5px;background:#282828;border-radius:3px"></div>
<div class="a" style="left:1166.3px;top:419.8px;width:4.4px;height:4.4px;border-radius:50%;background:#7cc050"></div>
<div class="a j" style="left:1176px;top:418.2px">プリンシプル<span class="l">BSDF</span></div>
<div class="a j" style="right:124px;top:440.2px;color:#d4d4d4">ベースカラー</div>
<div class="a" style="left:1163px;top:438.2px;width:11px;height:11.5px;background:#262626;border-radius:3px 0 0 3px"></div>
<div class="a" style="left:1166.3px;top:441.8px;width:4.4px;height:4.4px;border-radius:50%;background:#9cc060"></div>
<div class="a" style="left:1174px;top:437px;width:88px;height:14px;background:#ececec;border-radius:0 3px 3px 0"></div>
<div class="a" style="left:1266.7px;top:442.2px;width:3.6px;height:3.6px;border-radius:50%;background:#e8e8e8"></div>
<div class="a j" style="right:124px;top:456.2px;color:#d4d4d4">メタリック</div>
<div class="a" style="left:1163px;top:454.2px;width:11px;height:11.5px;background:#262626;border-radius:3px 0 0 3px"></div>
<div class="a" style="left:1166.3px;top:457.8px;width:4.4px;height:4.4px;border-radius:50%;background:#c8c8c8"></div>
<div class="a" style="left:1174px;top:454.2px;width:88px;height:11.5px;background:#545454;border-radius:0 3px 3px 0;overflow:hidden"><div class="a" style="left:0;top:0;width:79.2px;height:11.5px;background:#4772b3"></div></div>
<div class="a l" style="left:1174px;width:88px;text-align:center;top:456.2px;color:#e8e8e8">0.900</div>
<div class="a" style="left:1266.7px;top:458.2px;width:3.6px;height:3.6px;border-radius:50%;background:#e8e8e8"></div>
<div class="a j" style="right:124px;top:471.7px;color:#d4d4d4">粗さ</div>
<div class="a" style="left:1163px;top:469.7px;width:11px;height:11.5px;background:#262626;border-radius:3px 0 0 3px"></div>
<div class="a" style="left:1166.3px;top:473.3px;width:4.4px;height:4.4px;border-radius:50%;background:#c8c8c8"></div>
<div class="a" style="left:1174px;top:469.8px;width:88px;height:11.5px;background:#545454;border-radius:0 3px 3px 0;overflow:hidden"><div class="a" style="left:0;top:0;width:35.2px;height:11.5px;background:#4772b3"></div></div>
<div class="a l" style="left:1174px;width:88px;text-align:center;top:471.7px;color:#e8e8e8">0.400</div>
<div class="a" style="left:1266.7px;top:473.7px;width:3.6px;height:3.6px;border-radius:50%;background:#e8e8e8"></div>
<div class="a j" style="right:124px;top:487.2px;color:#d4d4d4">IOR</div>
<div class="a" style="left:1163px;top:485.2px;width:11px;height:11.5px;background:#262626;border-radius:3px 0 0 3px"></div>
<div class="a" style="left:1166.3px;top:488.8px;width:4.4px;height:4.4px;border-radius:50%;background:#c8c8c8"></div>
<div class="a" style="left:1174px;top:485.2px;width:88px;height:11.5px;background:#545454;border-radius:0 3px 3px 0;overflow:hidden"><div class="a" style="left:0;top:0;width:0.0px;height:11.5px;background:#4772b3"></div></div>
<div class="a l" style="left:1174px;width:88px;text-align:center;top:487.2px;color:#e8e8e8">1.500</div>
<div class="a" style="left:1266.7px;top:489.2px;width:3.6px;height:3.6px;border-radius:50%;background:#e8e8e8"></div>
<div class="a j" style="right:124px;top:502.7px;color:#d4d4d4">アルファ</div>
<div class="a" style="left:1163px;top:500.7px;width:11px;height:11.5px;background:#262626;border-radius:3px 0 0 3px"></div>
<div class="a" style="left:1166.3px;top:504.3px;width:4.4px;height:4.4px;border-radius:50%;background:#c8c8c8"></div>
<div class="a" style="left:1174px;top:500.8px;width:88px;height:11.5px;background:#545454;border-radius:0 3px 3px 0;overflow:hidden"><div class="a" style="left:0;top:0;width:88.0px;height:11.5px;background:#4772b3"></div></div>
<div class="a l" style="left:1174px;width:88px;text-align:center;top:502.7px;color:#e8e8e8">1.000</div>
<div class="a" style="left:1266.7px;top:504.7px;width:3.6px;height:3.6px;border-radius:50%;background:#e8e8e8"></div>
<div class="a j" style="right:124px;top:518.2px;color:#d4d4d4">ノーマル</div>
<div class="a" style="left:1162px;top:516.5px;width:100px;height:11.5px;background:#282828;border-radius:3px"></div>
<div class="a" style="left:1166.3px;top:519.8px;width:4.4px;height:4.4px;border-radius:50%;background:#6a8ad8"></div>
<div class="a j" style="left:1176px;top:518.2px">デフォルト</div>
<svg width="8" height="8" style="left:1092px;top:533.5px" viewBox="0 0 8 8"><path d="M3,1.2 L5.8,4 L3,6.8" stroke="#ddd" fill="none" stroke-width="1.1"/></svg>
<div class="a j" style="left:1104px;top:533.7px;">ディフューズ</div>
<svg width="8" height="8" style="left:1092px;top:548.5px" viewBox="0 0 8 8"><path d="M1.2,3 L4,5.8 L6.8,3" stroke="#ddd" fill="none" stroke-width="1.1"/></svg>
<div class="a j" style="left:1104px;top:548.7px;">サブサーフェス</div>
<div class="a" style="left:1163px;top:565px;width:99px;height:11.5px;background:#282828;border-radius:3px"></div>
<div class="a j" style="left:1167px;top:566.7px">ランダムウォーク</div>
<svg width="8" height="8" style="left:1251px;top:567px" viewBox="0 0 8 8"><path d="M1.2,3 L4,5.8 L6.8,3" stroke="#ddd" fill="none" stroke-width="1.1"/></svg>
<div class="a" style="left:1266.7px;top:568.7px;width:3.6px;height:3.6px;border-radius:50%;background:#e8e8e8"></div>
<div class="a j" style="right:124px;top:582.2px;color:#d4d4d4">ウェイト</div>
<div class="a" style="left:1163px;top:580.2px;width:11px;height:11.5px;background:#262626;border-radius:3px 0 0 3px"></div>
<div class="a" style="left:1166.3px;top:583.8px;width:4.4px;height:4.4px;border-radius:50%;background:#c8c8c8"></div>
<div class="a" style="left:1174px;top:580.2px;width:88px;height:11.5px;background:#545454;border-radius:0 3px 3px 0;overflow:hidden"><div class="a" style="left:0;top:0;width:0.0px;height:11.5px;background:#4772b3"></div></div>
<div class="a l" style="left:1174px;width:88px;text-align:center;top:582.2px;color:#e8e8e8">0.000</div>
<div class="a" style="left:1266.7px;top:584.2px;width:3.6px;height:3.6px;border-radius:50%;background:#e8e8e8"></div>
<div class="a j" style="right:124px;top:597.7px;color:#d4d4d4">半径</div>
<div class="a" style="left:1163px;top:595.7px;width:11px;height:11.5px;background:#262626;border-radius:3px 0 0 3px"></div>
<div class="a" style="left:1166.3px;top:599.3px;width:4.4px;height:4.4px;border-radius:50%;background:#6a8ad8"></div>
<div class="a" style="left:1178.5px;top:596px;width:83.5px;height:37px;background:#545454;border-radius:3px"></div>
<div class="a" style="left:1178.5px;top:608px;width:83.5px;height:0.8px;background:#454545"></div>
<div class="a" style="left:1178.5px;top:620.5px;width:83.5px;height:0.8px;background:#454545"></div>
<div class="a l" style="left:1178.5px;width:83.5px;text-align:center;top:597.7px;color:#e8e8e8">1.000</div>
<div class="a" style="left:1266.7px;top:599.7px;width:3.6px;height:3.6px;border-radius:50%;background:#e8e8e8"></div>
<div class="a l" style="left:1178.5px;width:83.5px;text-align:center;top:610.2px;color:#e8e8e8">0.200</div>
<div class="a" style="left:1266.7px;top:612.2px;width:3.6px;height:3.6px;border-radius:50%;background:#e8e8e8"></div>
<div class="a l" style="left:1178.5px;width:83.5px;text-align:center;top:622.7px;color:#e8e8e8">0.100</div>
<div class="a" style="left:1266.7px;top:624.7px;width:3.6px;height:3.6px;border-radius:50%;background:#e8e8e8"></div>
<div class="a j" style="right:124px;top:638.7px;color:#d4d4d4">スケール</div>
<div class="a" style="left:1163px;top:636.7px;width:11px;height:11.5px;background:#262626;border-radius:3px 0 0 3px"></div>
<div class="a" style="left:1166.3px;top:640.3px;width:4.4px;height:4.4px;border-radius:50%;background:#c8c8c8"></div>
<div class="a" style="left:1174px;top:636.8px;width:88px;height:11.5px;background:#545454;border-radius:0 3px 3px 0;overflow:hidden"><div class="a" style="left:0;top:0;width:0.0px;height:11.5px;background:#4772b3"></div></div>
<div class="a l" style="left:1174px;width:88px;text-align:center;top:638.7px;color:#e8e8e8">0.05 m</div>
<div class="a" style="left:1266.7px;top:640.7px;width:3.6px;height:3.6px;border-radius:50%;background:#e8e8e8"></div>
<div class="a j" style="right:124px;top:653.7px;color:#d4d4d4">異方性</div>
<div class="a" style="left:1163px;top:651.7px;width:11px;height:11.5px;background:#262626;border-radius:3px 0 0 3px"></div>
<div class="a" style="left:1166.3px;top:655.3px;width:4.4px;height:4.4px;border-radius:50%;background:#c8c8c8"></div>
<div class="a" style="left:1174px;top:651.8px;width:88px;height:11.5px;background:#545454;border-radius:0 3px 3px 0;overflow:hidden"><div class="a" style="left:0;top:0;width:0.0px;height:11.5px;background:#4772b3"></div></div>
<div class="a l" style="left:1174px;width:88px;text-align:center;top:653.7px;color:#e8e8e8">0.000</div>
<div class="a" style="left:1266.7px;top:655.7px;width:3.6px;height:3.6px;border-radius:50%;background:#e8e8e8"></div>
<div class="a" style="left:1086px;top:666px;width:185px;height:11px;background:#3a3a3a"></div>
<svg width="8" height="8" style="left:1092px;top:669px" viewBox="0 0 8 8"><path d="M3,1.2 L5.8,4 L3,6.8" stroke="#ddd" fill="none" stroke-width="1.1"/></svg>
<div class="a j" style="left:1104px;top:669.2px;">スペキュラー</div>
<svg width="140" height="12" style="left:0;top:676px" viewBox="0 0 140 12">
<g fill="none" stroke="#bbb" stroke-width="0.9"><rect x="7.5" y="2.5" width="5" height="8" rx="2.5"/><rect x="35.5" y="2.5" width="5" height="8" rx="2.5"/><rect x="93.5" y="2.5" width="5" height="8" rx="2.5"/></g>
<rect x="8" y="3" width="2.5" height="3" fill="#ddd"/><rect x="37" y="3" width="2" height="3" fill="#ddd"/><rect x="96" y="3" width="2.5" height="3" fill="#ddd"/>
</svg>
<div class="a j" style="left:15px;top:678.5px;color:#c8c8c8">選択</div>
<div class="a j" style="left:44px;top:678.5px;color:#c8c8c8">ビューを回転</div>
<div class="a j" style="left:101px;top:678.5px;color:#c8c8c8">オプション</div>
<div class="a l" style="left:1260px;top:678.5px;color:#8a8a8a">4.5.1</div>

</body></html>
